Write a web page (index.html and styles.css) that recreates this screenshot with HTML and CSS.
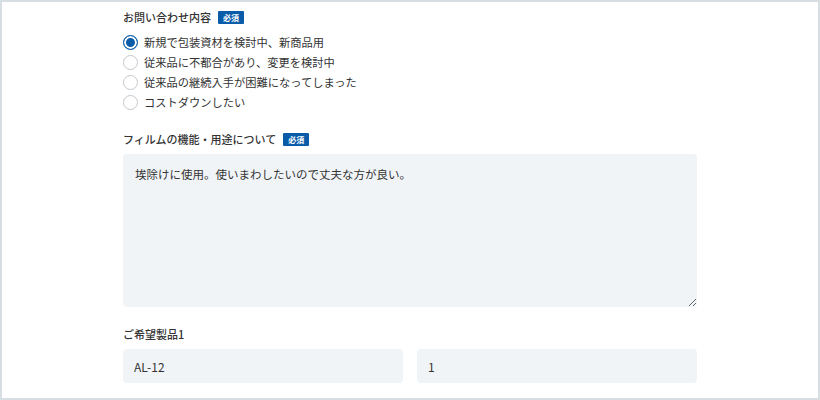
FILE: index.html
```html
<!DOCTYPE html>
<html>
<head>
    <title>お問い合わせ</title>
    <link rel="stylesheet" href="styles.css">
</head>
<body>
    <div class="frame">
        <form class="form">
            <div class="field">
                <div class="label">お問い合わせ内容 <span class="required">必須</span></div>
                <div class="radios">
                    <label class="radio"><input type="radio" name="kind" checked><span class="mark"></span>新規で包装資材を検討中、新商品用</label>
                    <label class="radio"><input type="radio" name="kind"><span class="mark"></span>従来品に不都合があり、変更を検討中</label>
                    <label class="radio"><input type="radio" name="kind"><span class="mark"></span>従来品の継続入手が困難になってしまった</label>
                    <label class="radio"><input type="radio" name="kind"><span class="mark"></span>コストダウンしたい</label>
                </div>
            </div>

            <div class="field">
                <div class="label">フィルムの機能・用途について <span class="required">必須</span></div>
                <textarea class="textarea">埃除けに使用。使いまわしたいので丈夫な方が良い。</textarea>
            </div>

            <div class="field">
                <div class="label">ご希望製品1</div>
                <div class="pair">
                    <input type="text" class="input" value="AL-12">
                    <input type="text" class="input" value="1">
                </div>
            </div>
        </form>
    </div>
</body>
</html>
```

FILE: styles.css
```css
* {
    box-sizing: border-box;
}

body {
    margin: 0;
    font-family: "Noto Sans CJK JP", "Noto Sans", sans-serif;
    color: #333;
    background: #fff;
}

.frame {
    width: 820px;
    height: 400px;
    border: 2px solid #d6dee2;
    overflow: hidden;
}

.form {
    width: 574px;
    margin-left: 121px;
    padding-top: 6px;
}

.field {
    margin-bottom: 18px;
}

.label {
    font-size: 11px;
    font-weight: 500;
    line-height: 18px;
    color: #333;
    display: flex;
    align-items: center;
    margin-bottom: 6px;
}

.required {
    display: inline-block;
    background-color: #0b5ca8;
    color: white;
    font-size: 8px;
    font-weight: 700;
    line-height: 13px;
    padding: 0 5px;
    margin-left: 7px;
    border-radius: 1px;
}

.radios {
    display: flex;
    flex-direction: column;
}

.radio {
    display: flex;
    align-items: center;
    height: 20px;
    font-size: 11.25px;
    color: #333;
}

.radio input {
    display: none;
}

.mark {
    width: 15px;
    height: 15px;
    border: 1px solid #c4c9cd;
    border-radius: 50%;
    margin-right: 6px;
    background: #fff;
}

.radio input:checked + .mark {
    border-color: #0b5ca8;
    background: #0b5ca8;
    box-shadow: inset 0 0 0 2px #fff;
}

.textarea {
    display: block;
    width: 574px;
    height: 153px;
    background-color: #f1f4f7;
    border: none;
    border-radius: 4px;
    padding: 10px 12px;
    font-family: inherit;
    font-size: 11.5px;
    line-height: 20px;
    color: #333;
    resize: vertical;
    outline: none;
}

.pair {
    display: flex;
    gap: 14px;
}

.input {
    width: 280px;
    height: 34px;
    background-color: #f1f4f7;
    border: none;
    border-radius: 4px;
    padding: 0 11px;
    font-family: inherit;
    font-size: 12px;
    color: #333;
    outline: none;
}
```
